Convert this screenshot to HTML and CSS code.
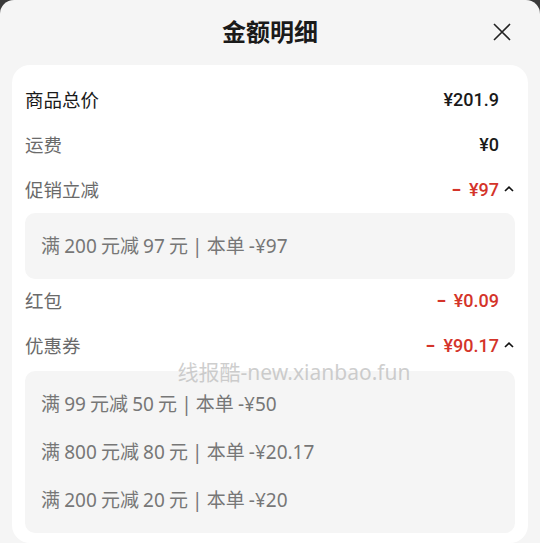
FILE: index.html
```html
<!DOCTYPE html>
<html lang="zh-CN">
  <head>
    <meta charset="UTF-8" />
    <meta name="viewport" content="width=device-width, initial-scale=1.0" />
    <title>金额明细</title>
    <link rel="stylesheet" href="styles.css">
  </head>
  <body>
    <div class="sheet">
      <header class="sheet-header">
        <h1>金额明细</h1>
        <button class="close" type="button" aria-label="关闭">
          <svg width="18" height="18" viewBox="0 0 18 18">
            <path d="M1 1 L17 17 M17 1 L1 17" stroke="#222" stroke-width="1.6" fill="none" />
          </svg>
        </button>
      </header>

      <div class="card">
        <div class="row">
          <span class="label strong">商品总价</span>
          <span class="value">¥201.9</span>
          <span class="arrow"></span>
        </div>
        <div class="row">
          <span class="label">运费</span>
          <span class="value">¥0</span>
          <span class="arrow"></span>
        </div>
        <div class="row">
          <span class="label">促销立减</span>
          <span class="value red"><span class="minus">-</span>¥97</span>
          <span class="arrow">
            <svg width="12" height="8" viewBox="0 0 12 8">
              <path d="M2 6 L6 2.2 L10 6" stroke="#111" stroke-width="1.7" fill="none" />
            </svg>
          </span>
        </div>
        <div class="detail">
          <p>满 200 元减 97 元 | 本单 -¥97</p>
        </div>
        <div class="row">
          <span class="label">红包</span>
          <span class="value red"><span class="minus">-</span>¥0.09</span>
          <span class="arrow"></span>
        </div>
        <div class="row">
          <span class="label">优惠券</span>
          <span class="value red"><span class="minus">-</span>¥90.17</span>
          <span class="arrow">
            <svg width="12" height="8" viewBox="0 0 12 8">
              <path d="M2 6 L6 2.2 L10 6" stroke="#111" stroke-width="1.7" fill="none" />
            </svg>
          </span>
        </div>
        <div class="detail second">
          <p>满 99 元减 50 元 | 本单 -¥50</p>
          <p>满 800 元减 80 元 | 本单 -¥20.17</p>
          <p>满 200 元减 20 元 | 本单 -¥20</p>
        </div>
      </div>

      <div class="watermark">线报酷-new.xianbao.fun</div>
    </div>
  </body>
</html>
```

FILE: styles.css
```css
body {
  margin: 0;
  padding: 0;
  background-color: #3a3a3a;
  font-family: "Noto Sans CJK SC", "Noto Sans", sans-serif;
  color: #222;
}
.sheet {
  position: relative;
  background-color: #f5f5f5;
  border-radius: 14px 14px 0 0;
  min-height: 543px;
  padding: 0 12px;
  box-sizing: border-box;
  overflow: hidden;
}
.sheet-header {
  height: 65px;
  box-sizing: border-box;
  padding-bottom: 4px;
  display: flex;
  justify-content: center;
  align-items: center;
  position: relative;
}
h1 {
  margin: 0;
  font-size: 24px;
  font-weight: 700;
  color: #1a1a1a;
  line-height: 1;
}
.close {
  position: absolute;
  right: 17px;
  top: 23px;
  width: 18px;
  height: 18px;
  padding: 0;
  border: none;
  background: transparent;
  cursor: pointer;
}
.card {
  background-color: #fff;
  border-radius: 18px;
  padding: 13px 13px 10px;
}
.row {
  height: 45px;
  box-sizing: border-box;
  padding-bottom: 3px;
  display: flex;
  align-items: center;
}
.label {
  flex: 1;
  font-size: 18.5px;
  color: #6a6a6a;
}
.label.strong {
  color: #1a1a1a;
}
.value {
  font-family: Roboto, "Noto Sans CJK SC", sans-serif;
  font-size: 18px;
  font-weight: 500;
  color: #1a1a1a;
}
.value.red {
  color: #d4342a;
}
.minus {
  display: inline-block;
  font-weight: 700;
  transform: scaleX(1.5);
  margin: 0 9px 0 2px;
}
.arrow {
  width: 16px;
  display: flex;
  justify-content: flex-end;
  align-items: center;
}
.detail {
  background-color: #f5f5f5;
  border-radius: 10px;
  padding: 9px 16px;
}
.detail.second {
  margin-top: 2px;
}
.detail p {
  margin: 0;
  line-height: 48px;
  font-family: "Noto Sans", "Noto Sans CJK SC", sans-serif;
  font-size: 19px;
  word-spacing: -0.8px;
  color: #777;
}
.watermark {
  position: absolute;
  left: 0;
  right: -48px;
  top: 356px;
  text-align: center;
  font-family: "Noto Sans", "Noto Sans CJK SC", sans-serif;
  font-size: 21px;
  color: rgba(190, 190, 190, 0.75);
  pointer-events: none;
}
```
